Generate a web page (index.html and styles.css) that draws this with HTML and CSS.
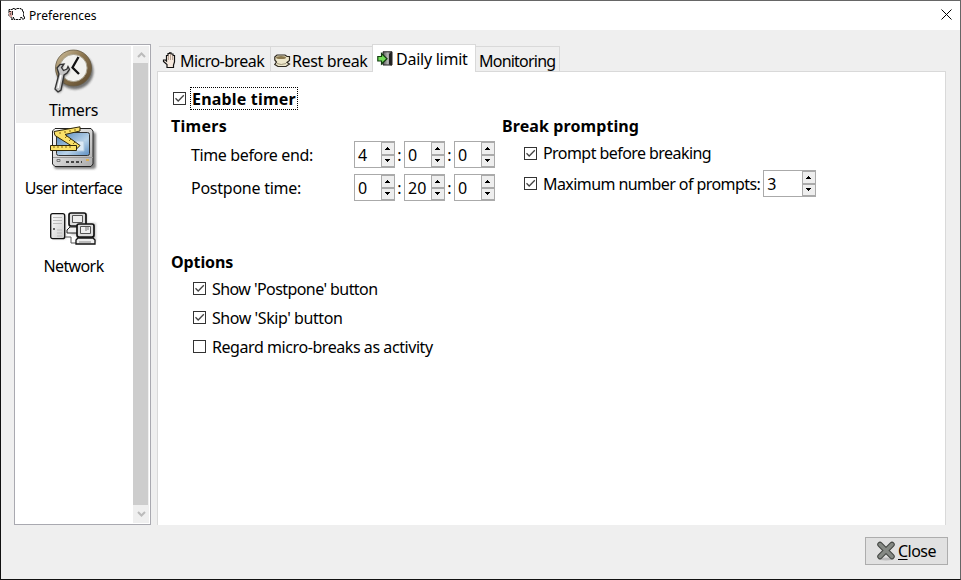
FILE: index.html
```html
<!DOCTYPE html>
<html lang="en">
<head>
<meta charset="utf-8">
<title>Preferences</title>
<link rel="stylesheet" href="styles.css">
</head>
<body>
<svg class="defs" width="0" height="0" aria-hidden="true">
<defs>
<symbol id="tick" viewBox="0 0 13 13"><rect x=".5" y=".5" width="12" height="12" fill="#fff" stroke="#333"/><path d="M2.500 6.200L5.200 9L10.800 3.300" fill="none" stroke="#444" stroke-width="1.300"/></symbol>
<symbol id="box" viewBox="0 0 13 13"><rect x=".5" y=".5" width="12" height="12" fill="#fff" stroke="#333"/></symbol>
<symbol id="up" viewBox="0 0 5 3"><path d="M0 3V2H1V1H2V0H3V1H4V2H5V3Z"/></symbol>
<symbol id="down" viewBox="0 0 5 3"><path d="M0 0V1H1V2H2V3H3V2H4V1H5V0Z"/></symbol>
<linearGradient id="metal" x2="1" y2="1"><stop stop-color="#fff"/><stop offset="1" stop-color="#aaa"/></linearGradient>
<linearGradient id="tower" x2="1" y2="1"><stop stop-color="#fff"/><stop offset="1" stop-color="#ccc"/></linearGradient>
<linearGradient id="screen" x2="1" y2="1"><stop stop-color="#4a7fb5"/><stop offset=".6" stop-color="#b9d3ea"/><stop offset="1" stop-color="#5b8dc0"/></linearGradient>
<linearGradient id="brass" x2="1" y2="1"><stop stop-color="#d6c7a5"/><stop offset=".45" stop-color="#8c7650"/><stop offset="1" stop-color="#59452a"/></linearGradient>
<linearGradient id="door"><stop stop-color="#555"/><stop offset=".55" stop-color="#bbb"/><stop offset="1" stop-color="#222"/></linearGradient>
<filter id="soft" x="-20%" y="-20%" width="140%" height="140%"><feGaussianBlur stdDeviation="1.300"/></filter>
</defs>
</svg>
<div class="window">
<header class="titlebar">
<svg class="sheep" width="17" height="13" viewBox="0 0 17 13"><path d="M1 3V1.500H4.500V.5H6.500V1.500H8V.5H13V1.500H14.500V3.500H15.500V8.500H16.500V11H14V9.500H12.500V11.500H6V9.500H5V11.500H3.500V9.500L1 8Z" fill="#fff" stroke="#111" stroke-dasharray="2.500 .6"/><path d="M1 3h3l1 2-1 4H2L1 7z" fill="#d8a49e"/><path d="M1 3.500h2M4.500 3v4M2 6h1" stroke="#222"/></svg>
<span class="title">Preferences</span>
<svg class="x" width="11" height="11" viewBox="0 0 11 11"><path d="M.5 .5L10.500 10.500M10.500 .5L.5 10.500" stroke="#000"/></svg>
</header>
<main class="content">
<nav class="sidebar">
<div class="items">
<div class="item selected">
<svg width="48" height="48" viewBox="0 0 48 48"><circle cx="25" cy="23" r="18.500" fill="#333" opacity=".65" filter="url(#soft)"/><circle cx="23.500" cy="20" r="18" fill="url(#brass)" stroke="#665a42" stroke-width=".8"/><circle cx="23.500" cy="20" r="13.600" fill="#f1f1ee" stroke="#aaa38f"/><path d="M28.500 9L22.500 19.500L29 26" fill="none" stroke="#111" stroke-width="2.300"/><path d="M8 21L11 17.500L14 17L12 20.500L13.500 23.500L17 22.500L18 19.500L20 22L18 26L15 28L12 42L9 45L5.500 42L9 27Z" fill="#444" opacity=".7" filter="url(#soft)"/><path d="M7 20L10 16.500L14 16L11.500 19.500L13.500 22.500L17 21L18 18.500L19.500 21.500L17 25L14 27L11 42L8 44L5 41L9 26Z" fill="#c4c4c4" stroke="#333" stroke-width="1.300"/><path d="M11 27L8 40" stroke="#fff" stroke-width="1.500"/></svg>
<span class="t1">Timers</span></div>
<div class="item">
<svg width="48" height="48" viewBox="0 0 48 48"><rect x="4" y="6" width="42" height="37" rx="3" fill="#333" opacity=".6" filter="url(#soft)"/><path d="M5 2.500H41L43 5V38L41 40.500H5L2.500 38V5Z" fill="url(#metal)" stroke="#222"/><rect x="6.500" y="6.500" width="33" height="23" rx="2" fill="url(#screen)" stroke="#333"/><path d="M26 15h8v10h-8zM20 21h5v4" fill="#dce9f5" stroke="#adc8df"/><path d="M3 31.500H43" stroke="#999"/><path d="M7 33.500h3v2H7z" fill="none" stroke="#777"/><path d="M16 36H32" stroke="#444" stroke-width="2" stroke-dasharray="3 2"/><path d="M36 34H39" stroke="#dcae55" stroke-width="2"/><path d="M4 5.500L30 .8V5L15 8.500L30 19.500L26.500 23L5 9.500Z" fill="#fae168" stroke="#302709"/><path d="M.5 19.500H26.500V24.500H.5Z" fill="#fae168" stroke="#302709"/><path d="M4 20v2M8 20v2M12 20v2M16 20v2M20 20v2M10 6v2M15 5v2M20 4v2M25 3v2M15 12l2-2M19 15l2-2M23 18l2-2" stroke="#856812"/></svg>
<span class="t2">User interface</span></div>
<div class="item">
<svg width="48" height="48" viewBox="0 0 48 48"><path d="M3 11H16V35H3zM22 10H37V19H46V38H27V31H21z" fill="#444" opacity=".3" filter="url(#soft)"/><rect x=".7" y="9.700" width="14" height="25" rx="2" fill="url(#tower)" stroke="#111" stroke-width="1.300"/><path d="M3 13.500h9M3 16.500h9M3 19.500h9M7 26h5M7 29h5M7 32h5" stroke="#bbb"/><path d="M3 24h2v2H3z" fill="#666"/><path d="M15 33h6v6h6" fill="none" stroke="#555"/><rect x="19" y="9" width="17" height="13" rx="2" fill="#ddd" stroke="#111" stroke-width="1.700"/><path d="M22.500 11.500h10v7h-10z" fill="#eee" stroke="#555"/><path d="M20 23h9v6H17v-3z" fill="#eee" stroke="#222"/><rect x="27" y="20" width="17" height="13" rx="2" fill="#ddd" stroke="#111" stroke-width="1.700"/><path d="M30.500 22.500h10v7h-10z" fill="#eee" stroke="#555"/><path d="M36 23v4M38 23v3" stroke="#777"/><path d="M28 34h15l2 2v4H26v-4z" fill="#eee" stroke="#111" stroke-width="1.300"/><path d="M29 38h12" stroke="#888"/></svg>
<span class="t3">Network</span></div>
</div>
<div class="scroll">
<svg width="9" height="6" viewBox="0 0 9 6"><path d="M1 5L4.500 1.500L8 5" fill="none" stroke="#bbb" stroke-width="2"/></svg>
<div class="thumb"></div>
<svg width="9" height="6" viewBox="0 0 9 6"><path d="M1 1L4.500 4.500L8 1" fill="none" stroke="#bbb" stroke-width="2"/></svg>
</div>
</nav>
<section class="notebook">
<div class="tabs">
<div class="tab micro"><svg width="16" height="18" viewBox="0 0 16 18"><path d="M5 15.500V12.500L1.500 9.500V8H3.500L4.500 9V3.500H6V1.500H7.500V.8H9V2H11V3.500H12.500V10L11.500 13V15.500Z" fill="#f6e9de" stroke="#111" stroke-width="1.200"/><path d="M6.500 3.500V8M8.500 2.500V8M10.500 3.500V8" stroke="#a88f80" stroke-width=".8"/></svg><span class="t4">Micro-break</span></div>
<div class="tab rest"><svg width="17" height="16" viewBox="0 0 17 16"><path d="M.8 4L3 2H11L13 3.500H15.500V7.500L13 9.500L15.500 11L12 13.500H4L.8 11.500L2.500 9L.8 7Z" fill="#ede6ca" stroke="#302a20" stroke-width="1.200"/><ellipse cx="7" cy="4.500" rx="5" ry="1.600" fill="#8a784e"/><path d="M3 10.500q4 2 9 0" fill="none" stroke="#a0977a"/></svg><span class="t5">Rest break</span></div>
<div class="tab active"><svg width="16" height="16" viewBox="0 0 16 16"><path d="M6 .8H15V14H6Z" fill="url(#door)" stroke="#222"/><path d="M12 3L14.500 1V15L12 13Z" fill="#222"/><path d="M.8 5.500H4.500V2.500L10 7.800L4.500 13V10H.8Z" fill="#73dc58" stroke="#123d10" stroke-width="1.200"/></svg><span class="t6">Daily limit</span></div>
<div class="tab mon"><span class="t7">Monitoring</span></div>
</div>
<div class="page">
<div class="enable"><svg class="cb"><use href="#tick"/></svg><b class="focus"><span class="t8">Enable timer</span></b></div>
<div class="columns">
<div class="timers">
<h2><span class="t9">Timers</span></h2>
<div class="time"><label><span class="t10">Time before end:</span></label><div class="spin"><span>4</span><i><svg><use href="#up"/></svg></i><i><svg><use href="#down"/></svg></i></div><em>:</em><div class="spin"><span>0</span><i><svg><use href="#up"/></svg></i><i><svg><use href="#down"/></svg></i></div><em>:</em><div class="spin"><span>0</span><i><svg><use href="#up"/></svg></i><i><svg><use href="#down"/></svg></i></div></div>
<div class="time"><label><span class="t11">Postpone time:</span></label><div class="spin"><span>0</span><i><svg><use href="#up"/></svg></i><i><svg><use href="#down"/></svg></i></div><em>:</em><div class="spin"><span>20</span><i><svg><use href="#up"/></svg></i><i><svg><use href="#down"/></svg></i></div><em>:</em><div class="spin"><span>0</span><i><svg><use href="#up"/></svg></i><i><svg><use href="#down"/></svg></i></div></div>
</div>
<div class="prompting">
<h2><span class="t12">Break prompting</span></h2>
<div class="prompt"><svg class="cb"><use href="#tick"/></svg><span class="t13">Prompt before breaking</span></div>
<div class="prompt max"><svg class="cb"><use href="#tick"/></svg><span class="t14">Maximum number of prompts:</span><div class="spin wide"><span>3</span><i><svg><use href="#up"/></svg></i><i><svg><use href="#down"/></svg></i></div></div>
</div>
</div>
<div class="options">
<h2><span class="t15">Options</span></h2>
<div class="option"><svg class="cb"><use href="#tick"/></svg><span class="t16">Show 'Postpone' button</span></div>
<div class="option"><svg class="cb"><use href="#tick"/></svg><span class="t17">Show 'Skip' button</span></div>
<div class="option"><svg class="cb"><use href="#box"/></svg><span class="t18">Regard micro-breaks as activity</span></div>
</div>
</div>
</section>
</main>
<footer><button><svg width="20" height="20" viewBox="0 0 20 20"><ellipse cx="10" cy="18" rx="8" ry="1.500" fill="#bbb"/><path d="M4 3.500L16 15.500M16 3.500L4 15.500" stroke="#424541" stroke-width="5.500" stroke-linecap="round"/><path d="M4 3.500L16 15.500M16 3.500L4 15.500" stroke="#858984" stroke-width="3.500" stroke-linecap="round"/></svg><span class="t19"><u>C</u>lose</span></button></footer>
</div>
</body>
</html>
```
FILE: styles.css
```css
*{box-sizing:border-box}
body{margin:0;font:16px/20px "Noto Sans",sans-serif;color:#000;white-space:nowrap}
svg{display:block;flex:none}
.defs{position:absolute}
.window{width:961px;height:580px;background:#efefef;border:1px solid #111;border-top-color:#666;border-right-color:#666;display:flex;flex-direction:column}
.titlebar{height:29px;background:#fff;display:flex;align-items:center;padding:0 8px 0 7px}
.sheep{margin-bottom:3px}
.x{margin-bottom:2px}
.title{font-size:12px;margin-left:4px;flex:1;letter-spacing:.08px}
.content{display:flex;height:495px;padding:14px 14px 0 13px}
.sidebar{width:137px;height:481px;border:1px solid #a9a9b0;background:#fff;display:flex;padding:1px;justify-content:space-between}
.items{width:115px}
.item{height:78px;display:flex;flex-direction:column;align-items:center;padding-top:2px}
.item span{margin-top:4px}
.selected{background:#efefef;height:77px}
.selected + .item{padding-top:3px;height:79px}
.scroll{width:16px;background:#efefef;display:flex;flex-direction:column;align-items:center;padding:6px 0}
.thumb{width:15px;height:443px;background:#cdcdcd;margin:5px 1px 6px 0}
.notebook{margin-left:6px;width:789px}
.tabs{height:28px;padding-left:2px;display:flex;align-items:flex-end}
.tab{height:26px;border-top:1px solid #d9d9d9;border-right:1px solid #d9d9d9;display:flex;align-items:center;padding-top:3px}
.micro{width:112px;padding-left:3px}
.micro svg{margin-right:2px}
.rest{width:102px;padding-left:3px;border-right:0}
.rest svg{margin-right:1px}
.active{width:104px;height:28px;background:#fff;border-left:1px solid #d9d9d9;padding-left:4px;margin-left:-1px;padding-top:1px;position:relative;z-index:1}
.active svg{margin-right:3px}
.mon{width:84px;padding-left:3px}
.page{height:454px;margin-top:-1px;border:1px solid #d9d9d9;border-bottom:0;background:#fff;padding:15px 0 0 13px}
.cb{width:13px;height:13px}
.enable{display:flex;height:23px;align-items:center;padding-left:2px}
.focus{width:108px;height:23px;border:1px dotted #000;margin-left:4px;padding:0 1px;line-height:22px}
.focus span{display:block;padding-top:1px;line-height:20px}
.columns{display:flex;margin-top:6px;height:136px}
.timers{width:331px}
h2{font-size:16px;line-height:20px;height:20px;margin:0}
.time{display:flex;height:33px;padding-left:20px;align-items:center;padding-bottom:4px}
.timers h2{margin-bottom:4px}
label{width:163px}
.spin{width:41px;height:27px;display:grid;grid-template:13px 12px/1fr 14px;border:1px solid #aaa;border-right:0;background:#fff}
.spin span{grid-row:1/3;padding-left:3px;line-height:26px}
.spin i{border:1px solid #aaa;background:#eee;display:grid;place-items:center}
.spin i svg{width:5px;height:3px;margin:0 1px 1px 0}
em{width:9px;text-align:center;font-style:normal}
.prompt{display:flex;align-items:center;height:20px;padding-left:22px;margin-top:7px}
.prompt>.cb{margin-right:6px}
.max{height:27px}
.wide{width:53px;margin-left:3px}
.options h2{margin-bottom:7px}
.option{display:flex;height:20px;align-items:center;padding-left:22px;margin-bottom:9px}
.option .cb{margin:-1px 6px 0 0}
footer{display:flex;justify-content:flex-end;padding:12px 12px 0 0}
button{width:83px;height:28px;border:1px solid #adadad;background:#e1e1e1;padding:0 0 0 10px;display:flex;align-items:center;font:inherit;color:#000}
button span{margin-left:2px}
u{text-underline-offset:2px}
.t1{letter-spacing:-.35px}
.t2{letter-spacing:-.58px}
.t3{letter-spacing:-.6px}
.t4{letter-spacing:-.54px}
.t5{letter-spacing:-.38px}
.t6{letter-spacing:-.25px}
.t7{letter-spacing:-.78px}
.t8{letter-spacing:.18px}
.t9{letter-spacing:.3px}
.t10{letter-spacing:-.37px}
.t11{letter-spacing:-.25px}
.t12{letter-spacing:.1px}
.t13{letter-spacing:-.56px}
.t14{letter-spacing:-.57px}
.t15{letter-spacing:-.1px}
.t16{letter-spacing:-.57px}
.t17{letter-spacing:-.43px}
.t18{letter-spacing:-.43px}
.t19{letter-spacing:-.55px}
```
